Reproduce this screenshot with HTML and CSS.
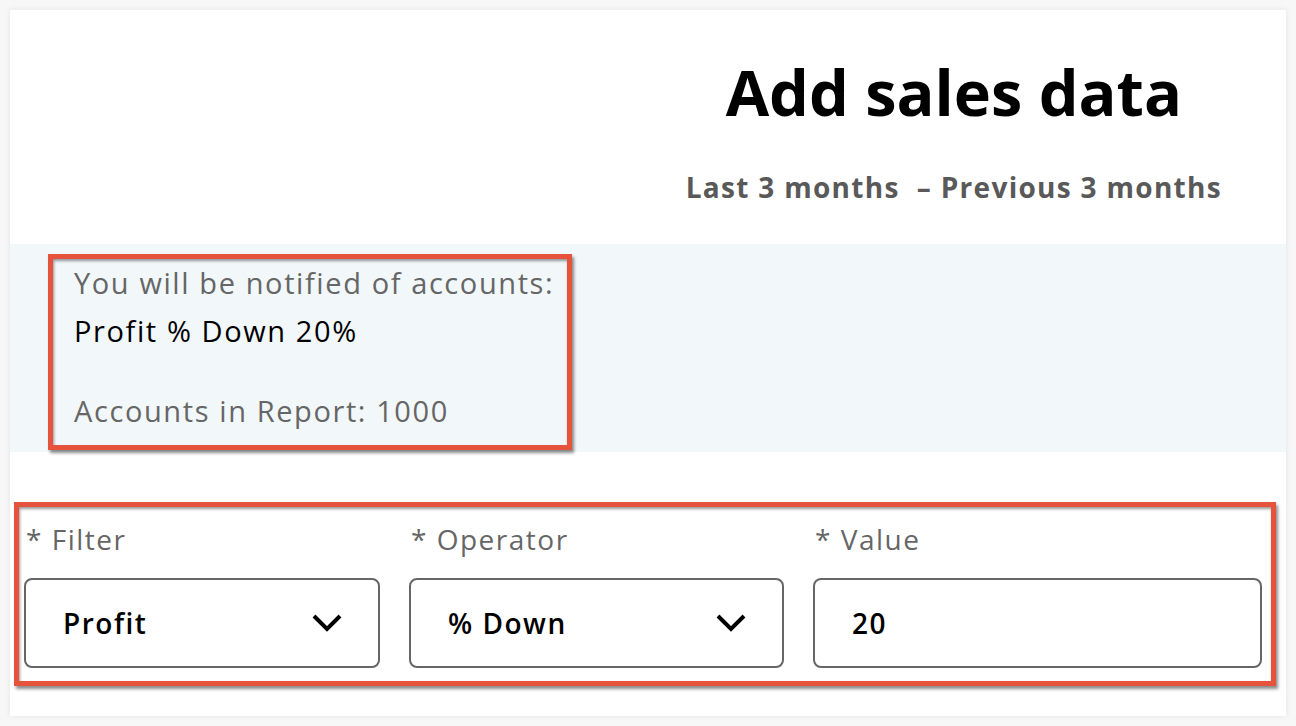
FILE: index.html
```html
<!DOCTYPE html>
<html lang="en">
<head>
	<meta charset="UTF-8">
	<title>Add sales data</title>
	<link rel="stylesheet" href="styles.css">
</head>
<body>
	<div class="card">
		<div class="head">
			<div class="head_txt">
				<h1>Add sales data</h1>
				<p class="range">Last 3 months&nbsp; – Previous 3 months</p>
			</div>
		</div>

		<div class="band">
			<div class="mark notice">
				<p class="muted">You will be notified of accounts:</p>
				<p class="rule">Profit % Down 20%</p>
				<p class="muted count">Accounts in Report: 1000</p>
			</div>
		</div>

		<div class="mark form">
			<div class="field">
				<label>* Filter</label>
				<div class="box">
					<span>Profit</span>
					<svg class="chev" width="30" height="18" viewBox="0 0 30 18"><path d="M2 2 L15 15 L28 2" fill="none" stroke="#000" stroke-width="4"/></svg>
				</div>
			</div>
			<div class="field">
				<label>* Operator</label>
				<div class="box">
					<span>% Down</span>
					<svg class="chev" width="30" height="18" viewBox="0 0 30 18"><path d="M2 2 L15 15 L28 2" fill="none" stroke="#000" stroke-width="4"/></svg>
				</div>
			</div>
			<div class="field">
				<label>* Value</label>
				<div class="box">
					<span>20</span>
				</div>
			</div>
		</div>
	</div>
</body>
</html>
```

FILE: styles.css
```css
*{
	margin: 0;
	padding: 0;
	box-sizing: border-box;
}
body{
	background: #f7f7f7;
	padding: 10px;
	font-family: "Open Sans", Lato, sans-serif;
}
.card{
	width: 1276px;
	height: 706px;
	background: #fff;
	box-shadow: 0 0 6px rgba(0,0,0,.08);
}
/* 标题区 */
.head{
	height: 234px;
	display: flex;
	justify-content: flex-end;
	padding-right: 64px;
}
.head_txt{
	text-align: center;
	padding-top: 50px;
}
.head h1{
	font-size: 63px;
	font-weight: 700;
	color: #000;
	line-height: 64px;
}
.head .range{
	margin-top: 44px;
	font-size: 28px;
	font-weight: 700;
	color: #595959;
	letter-spacing: 1.3px;
}
/* 红框 */
.mark{
	border: 5px solid #e5533d;
	box-shadow: 2px 3px 3px rgba(0,0,0,.45), inset 1px 2px 3px rgba(0,0,0,.4);
}
.band{
	height: 208px;
	background: #f2f7fa;
	padding: 10px 0 0 38px;
}
.notice{
	width: 524px;
	height: 196px;
	padding: 0 0 0 21px;
	font-size: 29px;
	letter-spacing: 1.6px;
}
.notice p{
	line-height: 48px;
}
.notice .muted{
	color: #666;
}
.notice .rule{
	color: #000;
}
.notice .count{
	margin-top: 32px;
}
/* 表单 */
.form{
	margin: 50px 0 0 4px;
	width: 1262px;
	height: 184px;
	display: grid;
	grid-template-columns: 356px 375px 449px;
	column-gap: 29px;
	padding: 12px 0 0 5px;
}
.field label{
	display: block;
	font-size: 28px;
	color: #666;
	line-height: 40px;
	padding-left: 2px;
	letter-spacing: 1.5px;
}
.box{
	margin-top: 19px;
	height: 90px;
	border: 2px solid #666;
	border-radius: 8px;
	display: flex;
	align-items: center;
	justify-content: space-between;
	padding: 0 36px 0 37px;
	font-size: 28px;
	font-weight: 600;
	color: #000;
	letter-spacing: 1.5px;
}
.chev{
	display: block;
}
```
